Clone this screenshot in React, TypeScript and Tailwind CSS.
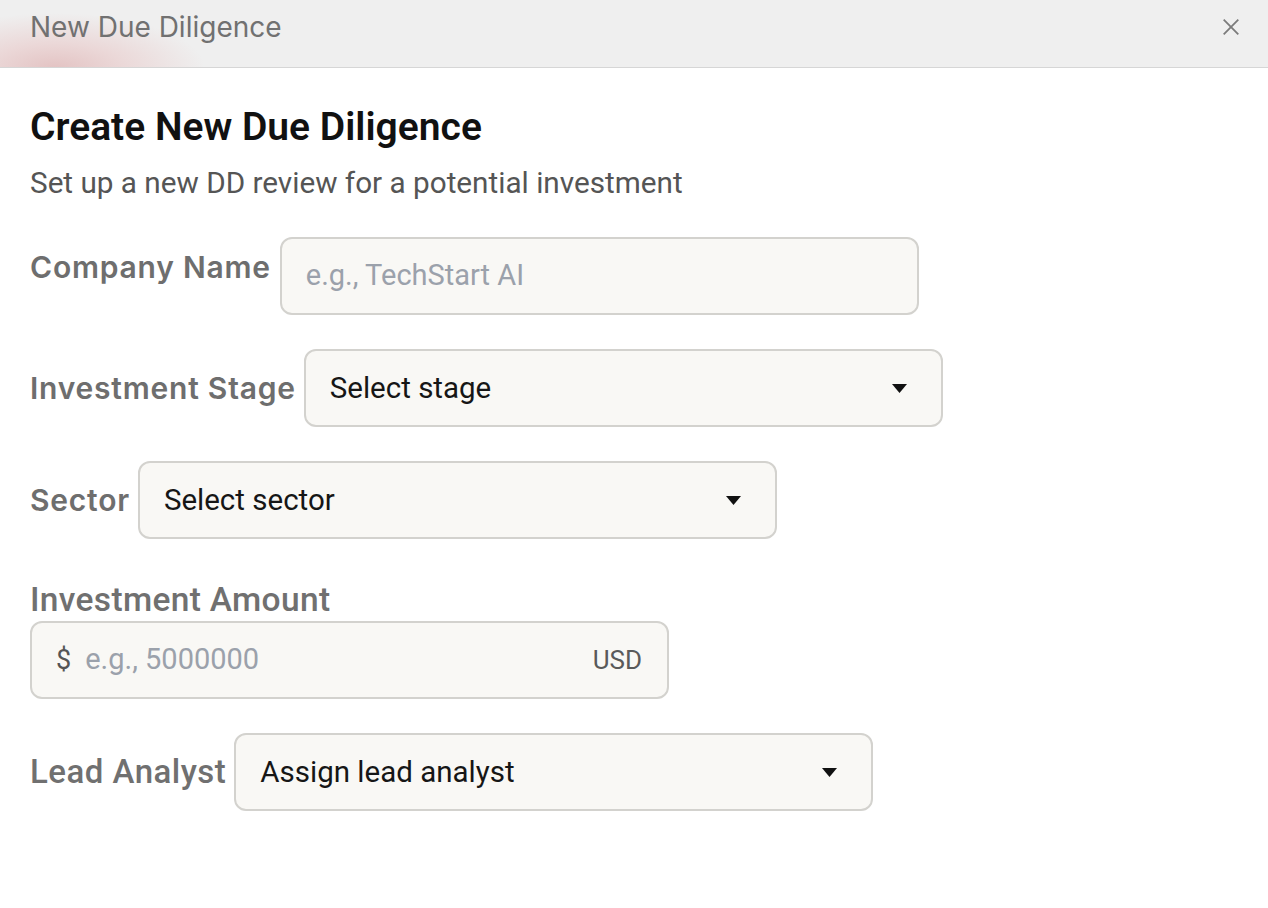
import React from "react";

const narrow = "font-['Roboto',sans-serif]";
const wide = "font-['Inter',sans-serif]";

function Caret() {
  return (
    <svg width="15" height="9" viewBox="0 0 15 9" className="shrink-0">
      <path d="M0 0 H15 L7.5 9 Z" fill="#111" />
    </svg>
  );
}

function SelectBox({ text }: { text: string }) {
  return (
    <div className="flex h-[78px] w-[639px] shrink-0 items-center justify-between rounded-[12px] border-2 border-[#d3d2ce] bg-[#f9f8f5] pl-[24px] pr-[34px]">
      <span className={`${narrow} text-[29.5px] text-[#161616]`}>{text}</span>
      <Caret />
    </div>
  );
}

function InlineLabel({ children, className = "" }: { children: React.ReactNode; className?: string }) {
  return (
    <span
      className={`${wide} whitespace-nowrap text-[30px] font-semibold tracking-[0.026em] text-[#6e6e6e] ${className}`}
    >
      {children}
    </span>
  );
}

export default function App() {
  return (
    <div className="min-h-[908px] w-[1268px] bg-white">
      <div className="flex h-[68px] items-start justify-between border-b border-[#d6d6d6] bg-[#efefef] bg-[radial-gradient(ellipse_150px_55px_at_55px_68px,#e3c3c3_0%,#ebd8d8_45%,transparent_100%)] pl-[30px] pr-[29px]">
        <span className={`${wide} pt-[10px] text-[28px] leading-[34px] text-[#717171]`}>New Due Diligence</span>
        <svg width="16" height="16" viewBox="0 0 16 16" className="mt-[19px]">
          <path d="M0.7 0.7 L15.3 15.3 M15.3 0.7 L0.7 15.3" stroke="#7b7b7b" strokeWidth="1.8" />
        </svg>
      </div>

      <div className="flex flex-col pl-[30px] pt-[35px]">
        <h1 className={`${narrow} text-[39px] font-semibold leading-[48px] text-[#111]`}>
          Create New Due Diligence
        </h1>
        <p className={`${narrow} mt-[14px] text-[29.7px] leading-[36px] text-[#555]`}>
          Set up a new DD review for a potential investment
        </p>

        <div className="mt-[36px] flex items-center gap-[9px]">
          <InlineLabel className="mb-[18px]">Company Name</InlineLabel>
          <div className="flex h-[78px] w-[639px] shrink-0 items-center rounded-[12px] border-2 border-[#d3d2ce] bg-[#f9f8f5] px-[24px]">
            <input
              placeholder="e.g., TechStart AI"
              className={`${narrow} w-full bg-transparent text-[29px] text-[#161616] outline-none placeholder:text-[#9ba1ab]`}
            />
          </div>
        </div>

        <div className="mt-[34px] flex items-center gap-[8px]">
          <InlineLabel>Investment Stage</InlineLabel>
          <SelectBox text="Select stage" />
        </div>

        <div className="mt-[34px] flex items-center gap-[8px]">
          <InlineLabel>Sector</InlineLabel>
          <SelectBox text="Select sector" />
        </div>

        <div className="mt-[42px] flex flex-col gap-[2px]">
          <span className={`${narrow} text-[33.5px] font-medium leading-[38px] tracking-[0.01em] text-[#707070]`}>
            Investment Amount
          </span>
          <div className="flex h-[78px] w-[639px] items-center rounded-[12px] border-2 border-[#d3d2ce] bg-[#f9f8f5] pl-[24px] pr-[25px]">
            <span className={`${narrow} text-[27px] text-[#555]`}>$</span>
            <input
              placeholder="e.g., 5000000"
              className={`${narrow} ml-[14px] min-w-0 flex-1 bg-transparent text-[29px] text-[#161616] outline-none placeholder:text-[#9ba1ab]`}
            />
            <span className={`${narrow} text-[26px] text-[#5a5a5a]`}>USD</span>
          </div>
        </div>

        <div className="mt-[34px] flex items-center gap-[8px]">
          <span className={`${narrow} whitespace-nowrap text-[33px] font-medium tracking-[0.015em] text-[#707070]`}>
            Lead Analyst
          </span>
          <SelectBox text="Assign lead analyst" />
        </div>
      </div>
    </div>
  );
}
